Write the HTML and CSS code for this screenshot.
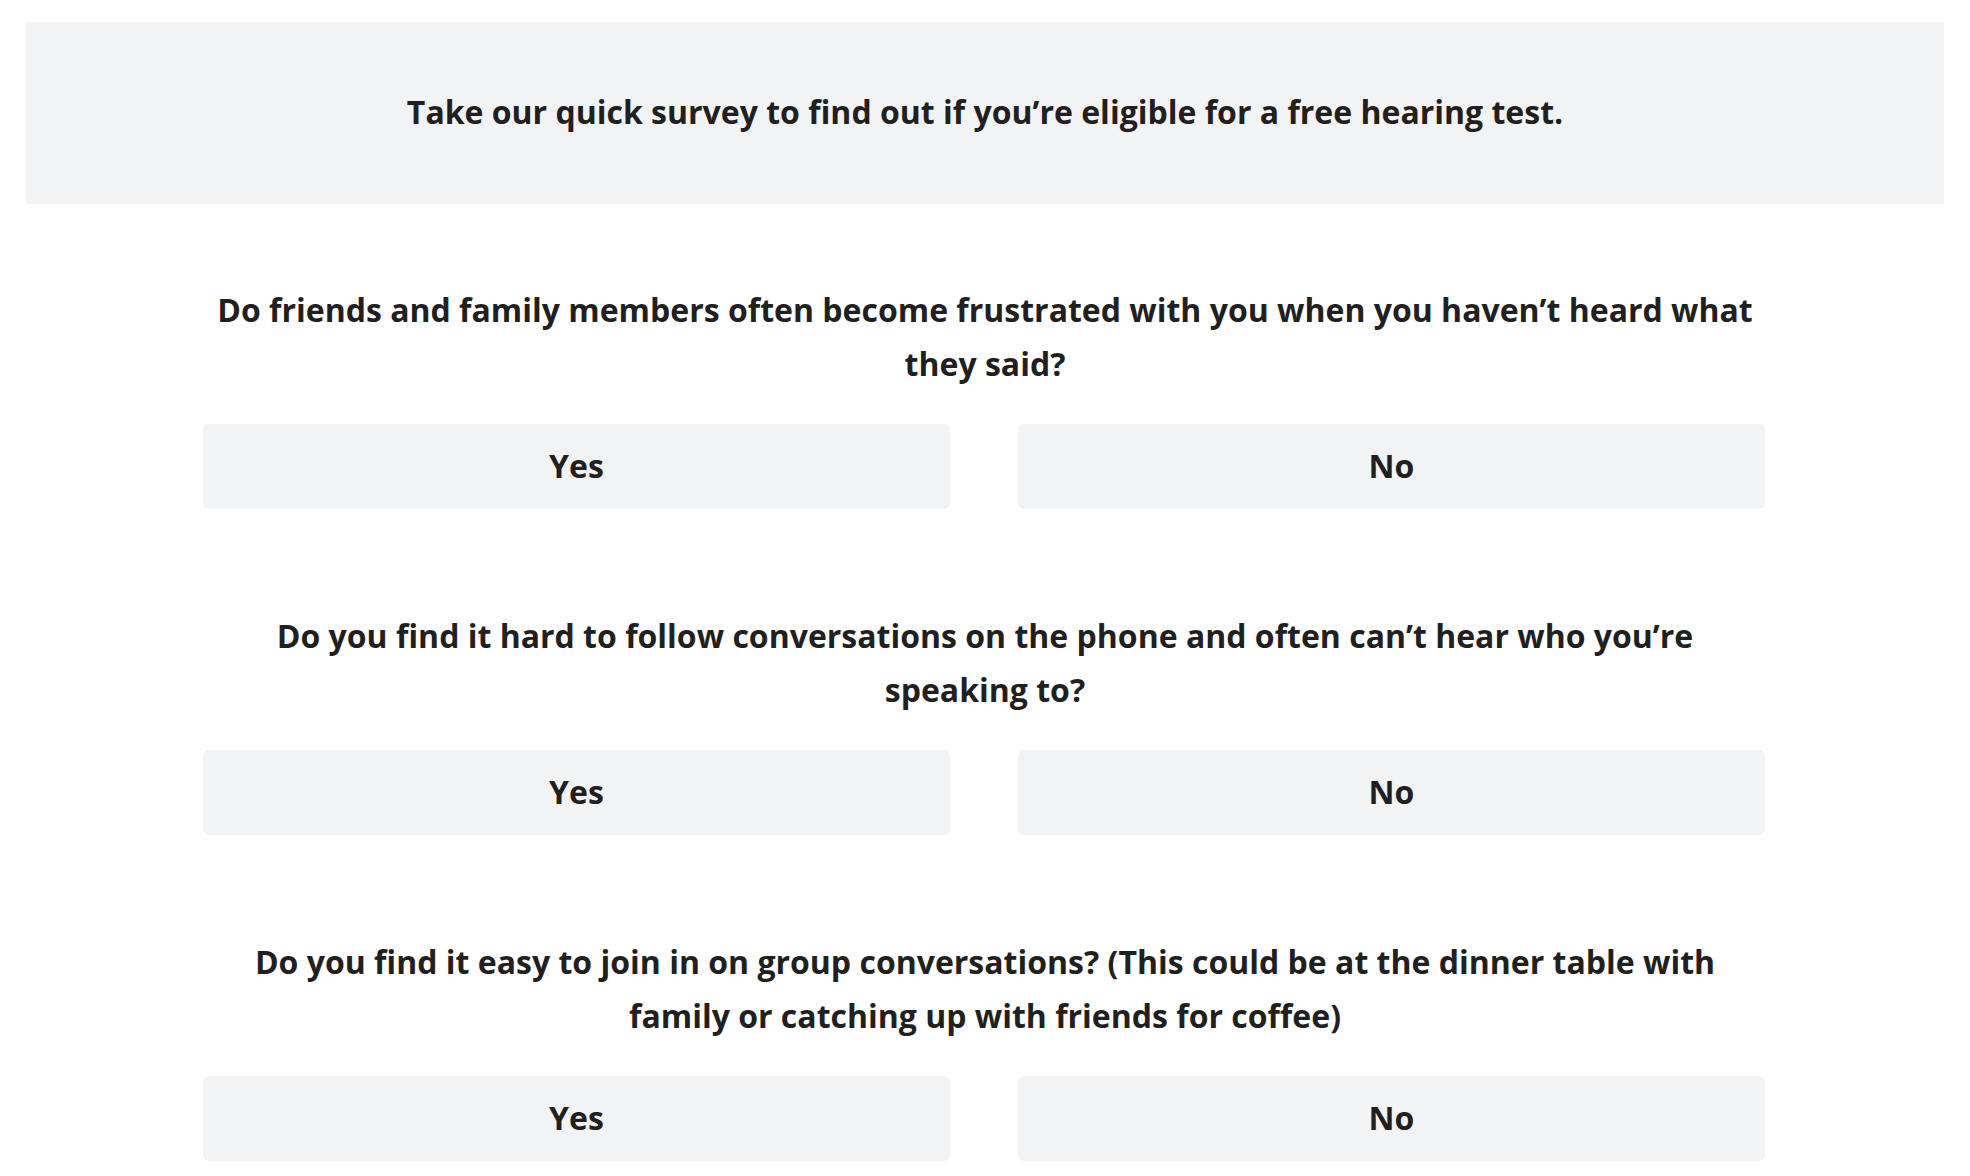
FILE: index.html
```html
<!DOCTYPE html>
<html lang="en">
<head>
<meta charset="utf-8">
<title>Hearing survey</title>
<link rel="stylesheet" href="styles.css">
</head>
<body>
<div class="banner">
  <p class="banner-text">Take our quick survey to find out if you’re eligible for a free hearing test.</p>
</div>
<main class="survey">
  <section class="question">
    <h2 class="question-title">Do friends and family members often become frustrated with you when you haven’t heard what they said?</h2>
    <div class="answers">
      <button class="answer">Yes</button>
      <button class="answer">No</button>
    </div>
  </section>
  <section class="question">
    <h2 class="question-title">Do you find it hard to follow conversations on the phone and often can’t hear who you’re speaking to?</h2>
    <div class="answers">
      <button class="answer">Yes</button>
      <button class="answer">No</button>
    </div>
  </section>
  <section class="question">
    <h2 class="question-title">Do you find it easy to join in on group conversations? (This could be at the dinner table with family or catching up with friends for coffee)</h2>
    <div class="answers">
      <button class="answer">Yes</button>
      <button class="answer">No</button>
    </div>
  </section>
</main>
</body>
</html>
```

FILE: styles.css
```css
html, body {
  margin: 0;
  padding: 0;
  background: #ffffff;
}
body {
  font-family: "Open Sans", "Noto Sans", "Liberation Sans", sans-serif;
  color: #231f20;
  padding-top: 22px;
}
.banner {
  margin: 0 26px;
  height: 182px;
  box-sizing: border-box;
  padding-bottom: 3px;
  background: #f2f3f5;
  display: flex;
  align-items: center;
  justify-content: center;
}
.banner-text {
  margin: 0;
  font-size: 32px;
  font-weight: 700;
  line-height: 44px;
  text-align: center;
}
.survey {
  width: 1564px;
  margin: 0 auto;
  padding-top: 79px;
}
.question {
  margin-bottom: 100px;
}
.question-title {
  margin: 0 0 33px;
  font-size: 32px;
  font-weight: 700;
  line-height: 54px;
  text-align: center;
}
.answers {
  display: grid;
  grid-template-columns: 747px 747px;
  column-gap: 68px;
}
.answer {
  height: 85px;
  box-sizing: border-box;
  border: 0;
  border-radius: 6px;
  background: #f2f3f5;
  color: #231f20;
  font-family: inherit;
  font-size: 32px;
  font-weight: 700;
  padding: 0 0 2px;
  cursor: pointer;
}
```
